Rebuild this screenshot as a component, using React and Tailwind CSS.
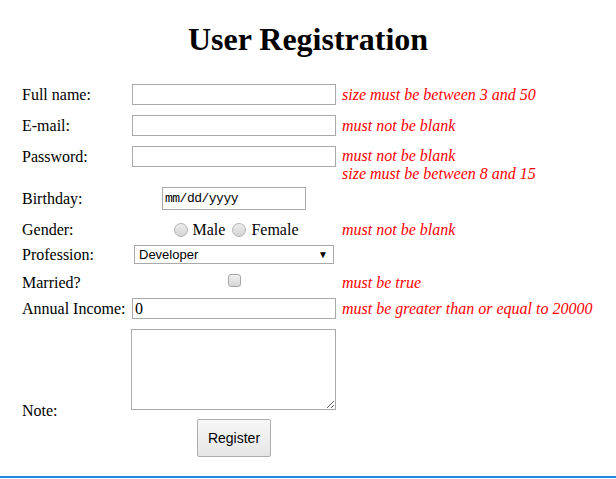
import React from "react";

const serif = "font-['Liberation_Serif','Times_New_Roman',serif]";
const sans = "font-['Liberation_Sans',Arial,sans-serif]";

const Label = ({ children }) => (
    <div className="w-[110px] shrink-0 text-[16px] leading-[18px]">{children}</div>
);

const Field = ({ children, className = "" }) => (
    <div className={`w-[204px] shrink-0 mr-[6px] flex ${className}`}>{children}</div>
);

const Err = ({ children }) => (
    <div className="italic text-[#ff0000] text-[16px] leading-[18px]">{children}</div>
);

const TextBox = ({ value = "" }) => (
    <div className={`w-[204px] h-[21px] border border-[#a9a9a9] bg-white px-[2px] text-[16px] leading-[19px] ${serif}`}>
        {value}
    </div>
);

const Radio = () => (
    <span className="inline-block w-[14px] h-[14px] rounded-full border border-[#b4b4b4] bg-gradient-to-b from-[#ececec] to-[#d4d4d4] mr-[5px]" />
);

const App = () => {
    return (
        <div className={`h-[479px] flex flex-col bg-white text-black ${serif}`}>
            <h1 className="mt-[21px] text-center text-[32px] leading-[37px] font-bold">User Registration</h1>

            <div className="pl-[22px] flex flex-col">
                <div className="mt-[26px] flex items-center">
                    <Label>Full name:</Label>
                    <Field><TextBox /></Field>
                    <Err>size must be between 3 and 50</Err>
                </div>

                <div className="mt-[10px] flex items-center">
                    <Label>E-mail:</Label>
                    <Field><TextBox /></Field>
                    <Err>must not be blank</Err>
                </div>

                <div className="mt-[10px] flex items-start">
                    <div className="h-[21px] flex items-center"><Label>Password:</Label></div>
                    <Field><TextBox /></Field>
                    <div className="pt-[1px]">
                        <Err>must not be blank</Err>
                        <Err>size must be between 8 and 15</Err>
                    </div>
                </div>

                <div className="mt-[4px] flex items-center">
                    <Label>Birthday:</Label>
                    <Field className="justify-center">
                        <div className="w-[144px] h-[23px] border border-[#a9a9a9] bg-white pl-[2px] text-[13px] leading-[21px] font-['Liberation_Mono',monospace] tracking-[-0.5px]">
                            mm/dd/yyyy
                        </div>
                    </Field>
                </div>

                <div className="mt-[11px] flex items-center">
                    <Label>Gender:</Label>
                    <Field className="justify-center items-center pl-[4px] text-[16px] leading-[18px]">
                        <Radio />
                        <span className="mr-[7px]">Male</span>
                        <Radio />
                        <span>Female</span>
                    </Field>
                    <Err>must not be blank</Err>
                </div>

                <div className="mt-[6px] flex items-center">
                    <Label>Profession:</Label>
                    <Field>
                        <div className={`ml-[2px] w-[200px] h-[19px] border border-[#a9a9a9] bg-white flex items-center justify-between pl-[4px] pr-[5px] text-[13px] ${sans}`}>
                            <span>Developer</span>
                            <span className="text-[10px]">▼</span>
                        </div>
                    </Field>
                </div>

                <div className="mt-[10px] flex items-center">
                    <Label>Married?</Label>
                    <Field className="justify-center">
                        <span className="inline-block w-[13px] h-[13px] -mt-[5px] rounded-[3px] border border-[#a6a6a6] bg-gradient-to-b from-[#f0f0f0] to-[#d6d6d6]" />
                    </Field>
                    <Err>must be true</Err>
                </div>

                <div className="mt-[6px] flex items-center">
                    <Label>Annual Income:</Label>
                    <Field><TextBox value="0" /></Field>
                    <Err>must be greater than or equal to 20000</Err>
                </div>

                <div className="mt-[10px] flex items-end">
                    <div className="-mb-[10px]"><Label>Note:</Label></div>
                    <Field>
                        <textarea className="-ml-[1px] w-[206px] h-[81px] border border-[#a9a9a9] bg-white resize block" />
                    </Field>
                </div>

                <div className="mt-[9px] flex">
                    <div className="w-[110px] shrink-0" />
                    <Field className="justify-center">
                        <button className={`w-[74px] h-[38px] rounded-[2px] border border-[#adadad] bg-gradient-to-b from-[#f8f8f8] to-[#e6e6e6] text-[14px] ${sans}`}>
                            Register
                        </button>
                    </Field>
                </div>
            </div>

            <div className="mt-auto mb-[1px] h-[2px] bg-[#1e88e5]" />
        </div>
    );
};

export default App;
